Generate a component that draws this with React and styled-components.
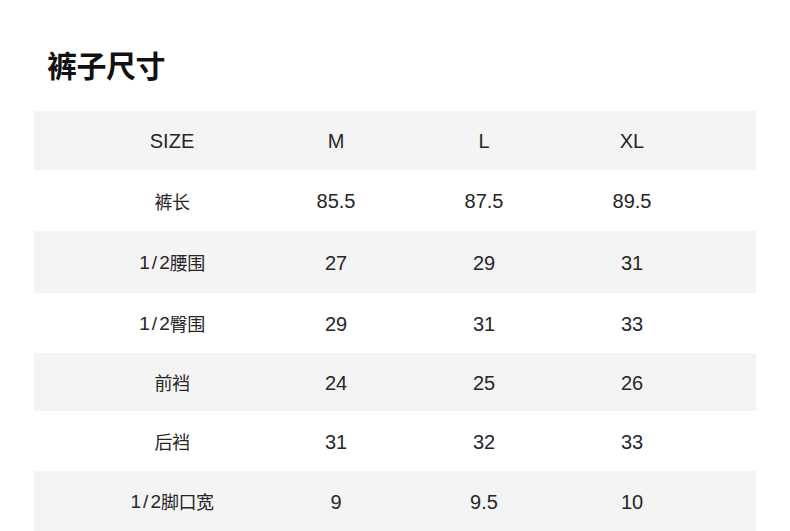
import React from 'react';
import styled, { createGlobalStyle } from 'styled-components';

const GlobalStyle = createGlobalStyle`
    body {
        margin: 0;
        background: #fff;
        font-family: "Liberation Sans", "Noto Sans CJK SC", sans-serif;
    }
`;

const Page = styled.div`
    width: 790px;
    height: 531px;
    overflow: hidden;
    padding: 0 34px;
    box-sizing: border-box;
`;

const Title = styled.h1`
    margin: 0;
    padding: 42px 0 0 13px;
    height: 111px;
    box-sizing: border-box;
    font-family: "Noto Sans CJK SC", sans-serif;
    font-size: 30px;
    line-height: 44px;
    font-weight: 700;
    color: #111;
    letter-spacing: -0.5px;
`;

const Table = styled.div`
    display: flex;
    flex-direction: column;
    width: 722px;
`;

const Row = styled.div`
    display: grid;
    grid-template-columns: 228px 148px 148px 148px 50px;
    align-items: center;
    height: ${p => p.h}px;
    background: ${p => (p.shaded ? '#f4f4f4' : '#fff')};
`;

const Cell = styled.div`
    display: flex;
    justify-content: center;
    align-items: center;
    height: 24px;
    margin-top: 1px;
    font-size: ${p => p.size}px;
    line-height: 24px;
    color: #262626;
    padding-left: ${p => (p.first ? '48px' : '0')};
`;

const Cjk = styled.span`
    font-family: "Noto Sans CJK SC", sans-serif;
    font-size: 18px;
    line-height: 24px;
    letter-spacing: -0.5px;
    margin-top: -1px;
`;

const Slash = styled.span`
    margin: 0 2px;
`;

const rows = [
    ['SIZE', 'M', 'L', 'XL'],
    ['裤长', '85.5', '87.5', '89.5'],
    ['1/2腰围', '27', '29', '31'],
    ['1/2臀围', '29', '31', '33'],
    ['前裆', '24', '25', '26'],
    ['后裆', '31', '32', '33'],
    ['1/2脚口宽', '9', '9.5', '10'],
];

const heights = [59, 61, 62, 60, 58, 60, 60];

function Label({ text }) {
    const m = text.match(/^(1\/2)?(.*)$/);
    if (!/[\u4e00-\u9fff]/.test(text)) return text;
    return (
        <>
            {m[1] && <span>1<Slash>/</Slash>2</span>}
            <Cjk>{m[2]}</Cjk>
        </>
    );
}

function App() {
    return (
        <Page>
            <GlobalStyle />
            <Title>裤子尺寸</Title>
            <Table>
                {rows.map((r, i) => (
                    <Row key={i} h={heights[i]} shaded={i % 2 === 0}>
                        {r.map((c, j) => (
                            <Cell key={j} first={j === 0} size={j === 0 && i > 0 ? 19 : 20}>
                                {j === 0 ? <Label text={c} /> : c}
                            </Cell>
                        ))}
                        <div />
                    </Row>
                ))}
            </Table>
        </Page>
    );
}

export default App;
